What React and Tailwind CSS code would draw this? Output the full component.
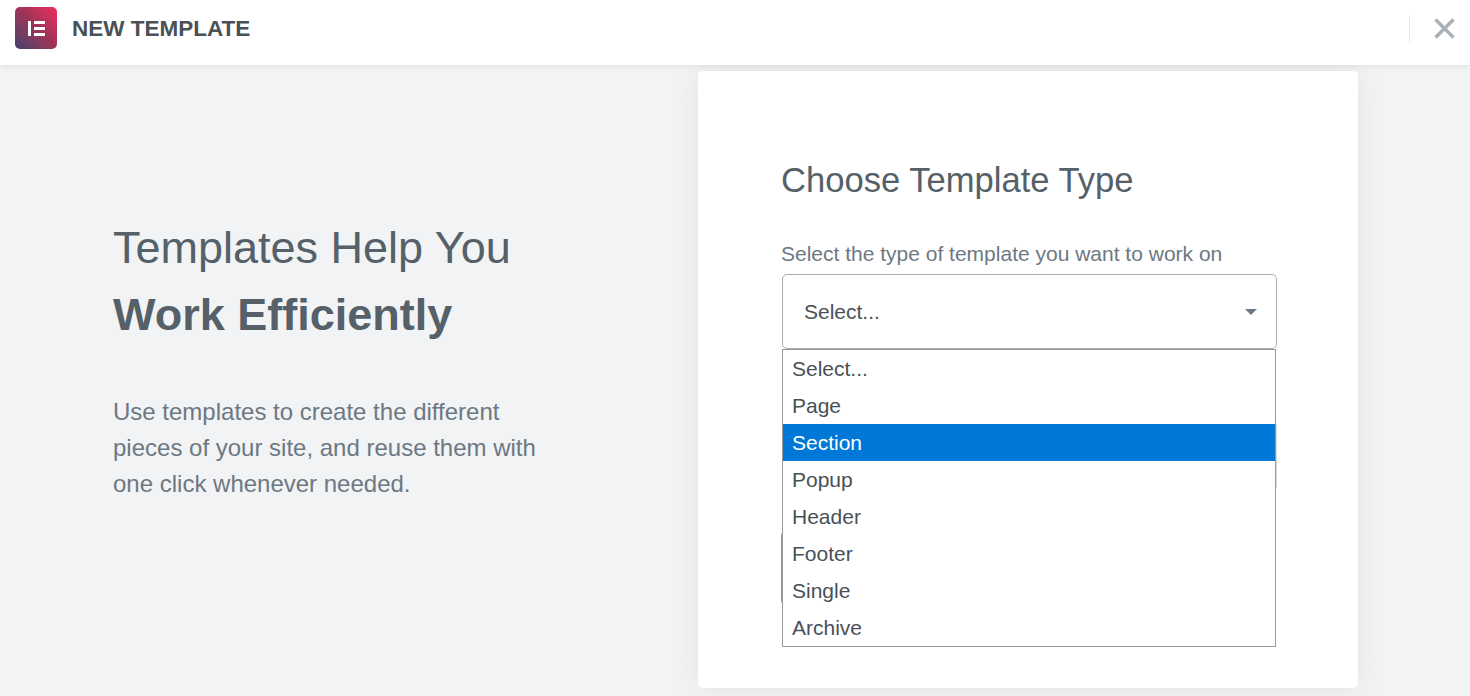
const OPTIONS = ['Select...', 'Page', 'Section', 'Popup', 'Header', 'Footer', 'Single', 'Archive'];

function Logo() {
  return (
    <div className="flex h-[42px] w-[42px] items-center justify-center gap-[3px] rounded-[5px] bg-gradient-to-tr from-[#3f3f6b] via-[#9b3358] to-[#ed2a5b]">
      <div className="h-[15px] w-[3px] bg-white" />
      <div className="flex h-[15px] w-[11px] flex-col justify-between">
        <div className="h-[3px] bg-white" />
        <div className="h-[3px] bg-white" />
        <div className="h-[3px] bg-white" />
      </div>
    </div>
  );
}

function Header() {
  return (
    <header className="relative z-10 flex h-[65px] items-center justify-between bg-white pb-[9px] pl-[15px] shadow-[0_0_8px_rgba(0,0,0,0.1)]">
      <div className="flex items-center gap-[15px]">
        <Logo />
        <h1 className="pt-[2px] text-[22.5px] font-bold text-[#495157]">NEW TEMPLATE</h1>
      </div>
      <div className="flex h-[27px] items-center border-l border-[#e6e8ea] pl-[24px] pr-[15px]">
        <svg width="21" height="21" viewBox="0 0 21 21" fill="none" stroke="#a9b2b9" strokeWidth="3.5">
          <path d="M1.5 1.5 L19.5 19.5 M19.5 1.5 L1.5 19.5" />
        </svg>
      </div>
    </header>
  );
}

function Intro() {
  return (
    <div className="w-[698px] pl-[113px] pt-[149px]">
      <h2 className="text-[45px] leading-[67px] text-[#556068]">
        Templates Help You
        <br />
        <span className="font-bold">Work Efficiently</span>
      </h2>
      <p className="mt-[46px] text-[24px] leading-[36px] text-[#6d7882]">
        Use templates to create the different
        <br />
        pieces of your site, and reuse them with
        <br />
        one click whenever needed.
      </p>
    </div>
  );
}

function Dropdown() {
  return (
    <ul className="absolute left-0 top-[75px] w-[494px] border border-[#9a9a9a] bg-white text-[21px] leading-[37px] text-[#495157]">
      {OPTIONS.map((option) => (
        <li
          key={option}
          className={option === 'Section' ? 'bg-[#0078d7] pl-[9px] text-white' : 'pl-[9px]'}
        >
          {option}
        </li>
      ))}
    </ul>
  );
}

function TemplateForm() {
  return (
    <div className="mt-[6px] h-[617px] w-[660px] rounded-[5px] bg-white pl-[83px] pt-[87px] shadow-[0_2px_30px_rgba(0,0,0,0.07)]">
      <h3 className="text-[34.6px] leading-[44px] text-[#556068]">Choose Template Type</h3>
      <label className="mt-[39px] block text-[21px] leading-[26px] text-[#6d7882]">
        Select the type of template you want to work on
      </label>
      <div className="relative ml-[1px] mt-[7px] w-[495px]">
        <div className="flex h-[75px] items-center justify-between rounded-[5px] border border-[#a4afb7] pl-[21px] pr-[19px] text-[21px] text-[#495157]">
          <span>Select...</span>
          <div className="h-0 w-0 border-x-[6px] border-t-[6px] border-x-transparent border-t-[#6d7882]" />
        </div>
        {/* Second field and button edge peeking out behind the open list */}
        <div className="absolute left-0 top-[146px] h-[71px] w-[495px] rounded-[5px] border border-[#d5dadf]" />
        <div className="absolute left-[-1px] top-[259px] h-[70px] w-[2px] rounded-l-[3px] bg-[#66b866]" />
        <Dropdown />
      </div>
    </div>
  );
}

export default function App() {
  return (
    <div className="flex h-[696px] flex-col overflow-hidden bg-[#f1f3f5] font-['Liberation_Sans',Arial,sans-serif]">
      <Header />
      <main className="flex flex-1">
        <Intro />
        <TemplateForm />
      </main>
    </div>
  );
}
